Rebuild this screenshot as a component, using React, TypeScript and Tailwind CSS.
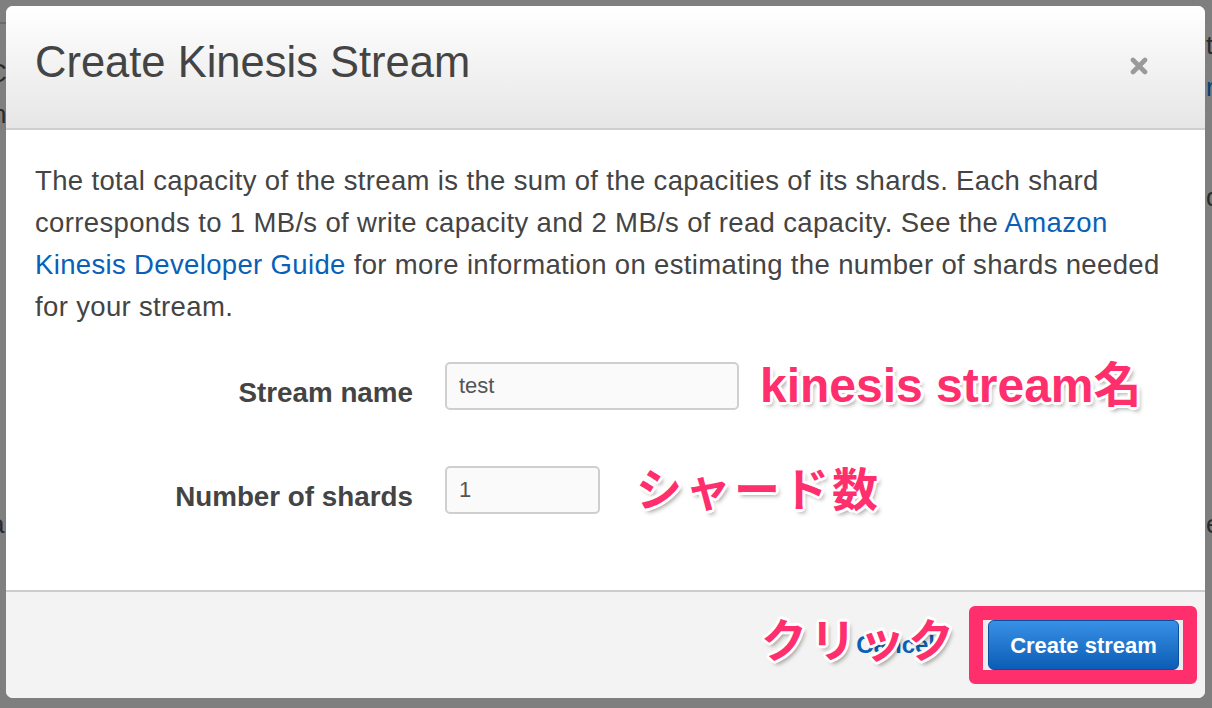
import React from 'react';

const outline =
  "[text-shadow:3px_0_0_#fff,-3px_0_0_#fff,0_3px_0_#fff,0_-3px_0_#fff,2px_2px_0_#fff,-2px_-2px_0_#fff,2px_-2px_0_#fff,-2px_2px_0_#fff,3px_4px_4px_rgba(0,0,0,0.35)]";

function Note({ children, className = '' }: { children: React.ReactNode; className?: string }) {
  return (
    <span
      className={`whitespace-nowrap font-bold leading-none text-[#ff2f6e] font-['Liberation_Sans','Noto_Sans_CJK_JP',sans-serif] ${outline} ${className}`}
    >
      {children}
    </span>
  );
}

export default function App() {
  return (
    <div className="relative w-[1212px] h-[708px] overflow-hidden bg-[#7f7f7f] font-['Liberation_Sans',Arial,sans-serif]">
      {/* page behind the dimmed overlay */}
      <div className="absolute left-[-40px] top-[-26px] text-[30px] leading-none text-[#262626]">Kinesis Streams</div>
      <div className="absolute left-0 top-[22px] w-[6px] h-[2px] bg-[#6b6b6b]" />
      <div className="absolute left-[-12px] top-[54px] text-[26px] text-[#2a2a2a]">Cr</div>
      <div className="absolute left-[-8px] top-[95px] text-[26px] text-[#2a2a2a]">n</div>
      <div className="absolute left-[-10px] top-[505px] text-[26px] text-[#2a2a2a]">al</div>
      <div className="absolute left-[1206px] top-[26px] text-[26px] text-[#2a2a2a]">t</div>
      <div className="absolute left-[1206px] top-[68px] text-[26px] text-[#0b3f78]">r</div>
      <div className="absolute left-[1206px] top-[178px] text-[26px] text-[#2a2a2a]">d</div>
      <div className="absolute left-[1206px] top-[505px] text-[26px] text-[#2a2a2a]">e</div>

      {/* modal */}
      <div className="absolute left-[6px] top-[6px] w-[1199px] h-[692px] rounded-[7px] bg-white overflow-hidden flex flex-col">
        {/* Header */}
        <div className="h-[124px] shrink-0 border-b-2 border-[#cfcfcf] bg-gradient-to-b from-white to-[#e6e6e6] flex items-center justify-between pl-[29px] pr-[57px] pb-[8px]">
          <h1 className="text-[43.5px] leading-none text-[#444]">Create Kinesis Stream</h1>
          <svg width="18" height="18" viewBox="0 0 18 18" className="mt-[6px]">
            <path d="M3 3 L15 15 M15 3 L3 15" stroke="#9a9a9a" strokeWidth="4.6" strokeLinecap="round" />
          </svg>
        </div>

        {/* Body */}
        <div className="flex-1 px-[29px] pt-[30px]">
          <p className="text-[27.5px] tracking-[0.35px] leading-[42px] text-[#444] whitespace-nowrap">
            The total capacity of the stream is the sum of the capacities of its shards. Each shard
            <br />
            corresponds to 1 MB/s of write capacity and 2 MB/s of read capacity. See the{' '}
            <a className="text-[#0a5fb6]">Amazon</a>
            <br />
            <a className="text-[#0a5fb6]">Kinesis Developer Guide</a> for more information on estimating the
            number of shards needed
            <br />
            for your stream.
          </p>

          <div className="mt-[34px] flex items-start gap-[32px]">
            <label className="w-[378px] text-right font-bold text-[27.8px] leading-[48px] pt-[7px] text-[#444]">
              Stream name
            </label>
            <div className="flex items-center gap-[21px]">
              <div className="w-[294px] h-[48px] rounded-[5px] border-2 border-[#cfcfcf] bg-[#fafafa] px-[12px] flex items-center text-[22px] text-[#555] pb-[2px]">
                test
              </div>
              <Note className="text-[48px]">kinesis stream名</Note>
            </div>
          </div>

          <div className="mt-[49px] flex items-start gap-[32px]">
            <label className="w-[378px] text-right font-bold text-[27.8px] leading-[48px] pt-[7px] text-[#444]">
              Number of shards
            </label>
            <div className="flex items-center gap-[36px]">
              <div className="w-[155px] h-[48px] rounded-[5px] border-2 border-[#cfcfcf] bg-[#fafafa] px-[12px] flex items-center text-[22px] text-[#555] pb-[2px]">
                1
              </div>
              <Note className="text-[46px] tracking-[3px]">シャード数</Note>
            </div>
          </div>
        </div>

        {/* Footer */}
        <div className="relative h-[108px] shrink-0 border-t-2 border-[#cccccc] bg-[#f3f3f3] flex items-center justify-end pr-[8px]">
          <a className="mr-[34px] text-[24px] font-bold text-[#0b5fb5]">Cancel</a>
          <div className="rounded-[6px] border-[14px] border-[#ff2f6e] bg-[#ececec] pl-[5px] pr-[4px]">
            <button className="w-[191px] h-[50px] rounded-[6px] border border-[#0a4f9e] bg-gradient-to-b from-[#3791e6] to-[#0a5db5] text-white font-bold text-[22px]">
              Create stream
            </button>
          </div>
          <Note className="absolute right-[248px] top-[26px] text-[46px] tracking-[3px]">クリック</Note>
        </div>
      </div>
    </div>
  );
}
